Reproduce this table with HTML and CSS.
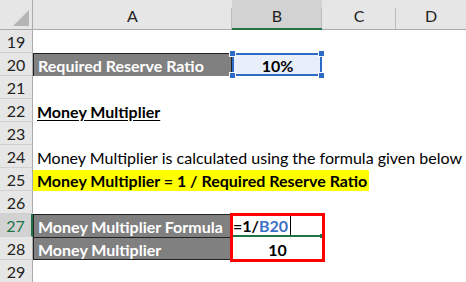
FILE: index.html
```html
<!DOCTYPE html>
<html>
<head>
<meta charset="utf-8">
<link rel="stylesheet" href="styles.css">
</head>
<body>
<div class="sheet">
  <div class="corner"><span class="tri"></span></div>
  <div class="colhead">A</div>
  <div class="colhead sel">B</div>
  <div class="colhead">C</div>
  <div class="colhead last">D</div>

  <div class="rowhead">19</div>
  <div class="cell span4"></div>

  <div class="rowhead">20</div>
  <div class="cell dark">Required Reserve Ratio</div>
  <div class="cell selcell">10%
    <span class="h tl"></span><span class="h tr"></span><span class="h bl"></span><span class="h br"></span>
  </div>
  <div class="cell span2"></div>

  <div class="rowhead">21</div>
  <div class="cell span4"></div>

  <div class="rowhead">22</div>
  <div class="cell span4 bold"><span class="ul">Money Multiplier</span></div>

  <div class="rowhead">23</div>
  <div class="cell span4"></div>

  <div class="rowhead">24</div>
  <div class="cell span4">Money Multiplier is calculated using the formula given below</div>

  <div class="rowhead">25</div>
  <div class="cell span4 bold hl-row"><span class="hl">Money Multiplier = 1 / Required Reserve Ratio</span></div>

  <div class="rowhead">26</div>
  <div class="cell span4"></div>

  <div class="rowhead selrow">27</div>
  <div class="cell dark">Money Multiplier Formula</div>
  <div class="cell edit">=1/<span class="ref">B20</span><span class="caret"></span><span class="fill"></span></div>
  <div class="cell span2"></div>

  <div class="rowhead">28</div>
  <div class="cell dark bot">Money Multiplier</div>
  <div class="cell num">10</div>
  <div class="cell span2"></div>

  <div class="rowhead">29</div>
  <div class="cell span4"></div>

  <div class="redbox"></div>
</div>
</body>
</html>
```
FILE: styles.css
```css
html, body {
  margin: 0;
  padding: 0;
  background: #ffffff;
  overflow: hidden;
}
body {
  font-family: "Lato", "Liberation Sans", sans-serif;
  font-size: 16px;
  color: #000;
}
.sheet {
  position: relative;
  display: grid;
  grid-template-columns: 33px 199px 90px 74px 70px;
  grid-template-rows: 30px repeat(11, 23px);
  width: 466px;
  height: 282px;
  overflow: hidden;
}
.corner {
  background: #e6e6e6;
  border-bottom: 1px solid #ababab;
  border-right: 1px solid #ababab;
  position: relative;
  box-sizing: border-box;
}
.tri {
  position: absolute;
  right: 3px;
  bottom: 3px;
  width: 0;
  height: 0;
  border-left: 16px solid transparent;
  border-bottom: 16px solid #b5b5b5;
}
.colhead {
  background: #e6e6e6;
  border-bottom: 1px solid #ababab;
  box-sizing: border-box;
  display: flex;
  align-items: flex-end;
  justify-content: center;
  padding-bottom: 4px;
  font-size: 16px;
  color: #222;
  position: relative;
}
.colhead::after {
  content: "";
  position: absolute;
  right: 0;
  top: 8px;
  bottom: 0;
  width: 1px;
  background: #bdbdbd;
}
.colhead.last::after { display: none; }
.colhead.sel {
  background: #d2d2d2;
  border-bottom: 2px solid #217346;
  padding-bottom: 3px;
}
.rowhead {
  background: #e6e6e6;
  border-right: 1px solid #ababab;
  border-bottom: 1px solid #d0d0d0;
  box-sizing: border-box;
  display: flex;
  align-items: center;
  justify-content: center;
  padding-top: 1px;
  font-size: 16px;
  color: #222;
}
.rowhead.selrow {
  background: #d2d2d2;
  color: #217346;
  border-right: 2px solid #217346;
}
.cell {
  box-sizing: border-box;
  display: flex;
  align-items: center;
  padding: 1px 3px 0 4px;
  white-space: nowrap;
  position: relative;
}
.span4 { grid-column: span 4; }
.span2 { grid-column: span 2; }
.bold { font-weight: 700; }
.ul {
  text-decoration: underline;
  text-underline-offset: 2px;
}
.dark {
  background: #808080;
  color: #fff;
  font-weight: 700;
  border: 1px solid #222;
  border-bottom: none;
}
.dark.bot { border-bottom: 1px solid #222; }
.selcell {
  background: #e8effa;
  border: 2px solid #2e6bc6;
  justify-content: center;
  font-weight: 700;
}
.h {
  position: absolute;
  width: 5px;
  height: 5px;
  background: #2e6bc6;
  border: 1px solid #fff;
}
.h.tl { left: -5px; top: -5px; }
.h.tr { right: -5px; top: -5px; }
.h.bl { left: -5px; bottom: -5px; }
.h.br { right: -5px; bottom: -5px; }
.hl-row { padding-left: 0; }
.hl {
  background: #ffff00;
  display: flex;
  align-items: center;
  height: 21px;
  padding: 0 2px 0 4px;
}
.edit {
  font-weight: 700;
  padding-left: 1px;
  border-bottom: 2px solid #217346;
}
.ref { color: #3a6fc4; }
.caret {
  display: inline-block;
  width: 1px;
  height: 20px;
  background: #000;
  margin-left: 2px;
}
.fill {
  position: absolute;
  right: -2px;
  bottom: -3px;
  width: 4px;
  height: 4px;
  background: #217346;
}
.num {
  justify-content: center;
  font-weight: 700;
}
.redbox {
  position: absolute;
  left: 230px;
  top: 213px;
  width: 95px;
  height: 49px;
  box-sizing: border-box;
  border: 3px solid #ff0000;
  pointer-events: none;
}
```
